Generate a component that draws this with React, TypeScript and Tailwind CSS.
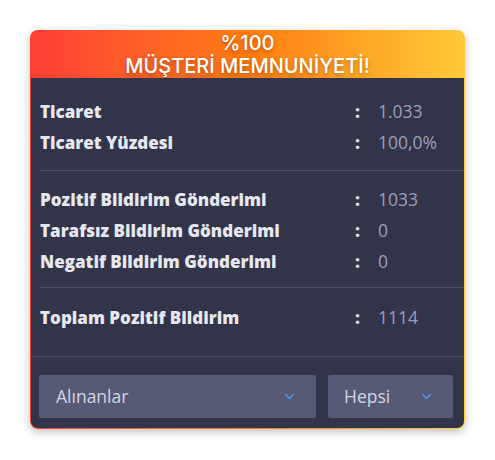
import { ChevronDown } from 'lucide-react'

const groups = [
  [
    { label: 'Ticaret', value: '1.033' },
    { label: 'Ticaret Yüzdesi', value: '100,0%' },
  ],
  [
    { label: 'Pozitif Bildirim Gönderimi', value: '1033' },
    { label: 'Tarafsız Bildirim Gönderimi', value: '0' },
    { label: 'Negatif Bildirim Gönderimi', value: '0' },
  ],
  [{ label: 'Toplam Pozitif Bildirim', value: '1114' }],
]

function Row({ label, value }: { label: string; value: string }) {
  return (
    <div className="flex h-[31px] items-center">
      <span className="w-[315px] text-[17px] font-extrabold text-[#e6e7ef]">{label}</span>
      <span className="w-[23px] text-[17px] font-extrabold text-[#e6e7ef]">:</span>
      <span className="text-[17.5px] text-[#9c9fb8]">{value}</span>
    </div>
  )
}

export default function App() {
  return (
    <div className="min-h-screen bg-white p-[30px]" style={{ fontFamily: '"Open Sans", sans-serif' }}>
      <div className="w-[435px] overflow-hidden rounded-[8px] bg-gradient-to-r from-[#ff3d35] via-[#ff7a0c] to-[#ffca3a] p-px shadow-[0_3px_8px_rgba(0,0,0,0.25)]">
        <div
          className="flex h-[47px] flex-col items-center justify-center text-[20px] font-medium leading-[23px] text-white [text-shadow:0_2px_4px_rgba(0,0,0,0.3)]"
          style={{ fontFamily: 'Inter, sans-serif' }}
        >
          <span>%100</span>
          <span>MÜŞTERİ MEMNUNİYETİ!</span>
        </div>
        <div className="rounded-b-[7px] bg-[#32344a]">
          <div className="pl-[9px] pt-[18px] pb-[12px]">
            {groups[0].map((r) => (
              <Row key={r.label} {...r} />
            ))}
          </div>
          <div className="ml-[9px] h-px bg-[#4a4d64]" />
          <div className="pl-[9px] pt-[13px] pb-[10px]">
            {groups[1].map((r) => (
              <Row key={r.label} {...r} />
            ))}
          </div>
          <div className="ml-[9px] h-px bg-[#4a4d64]" />
          <div className="pl-[9px] pt-[14px] pb-[23px]">
            {groups[2].map((r) => (
              <Row key={r.label} {...r} />
            ))}
          </div>
          <div className="h-px bg-[#4a4d64]" />
          <div className="flex gap-[12px] pl-[8px] pr-[11px] pt-[18px] pb-[10px]">
            <div className="flex h-[43px] w-[277px] items-center justify-between rounded-[2px] bg-[#575a75] pl-[17px] pr-[19px] text-[17.5px] text-[#d3d5e2]">
              <span>Alınanlar</span>
              <ChevronDown className="h-[15px] w-[15px] text-[#4d94e6]" strokeWidth={2.5} />
            </div>
            <div className="flex h-[43px] flex-1 items-center justify-between rounded-[2px] bg-[#575a75] pl-[16px] pr-[19px] text-[17.5px] text-[#d3d5e2]">
              <span>Hepsi</span>
              <ChevronDown className="h-[15px] w-[15px] text-[#4d94e6]" strokeWidth={2.5} />
            </div>
          </div>
        </div>
      </div>
    </div>
  )
}
